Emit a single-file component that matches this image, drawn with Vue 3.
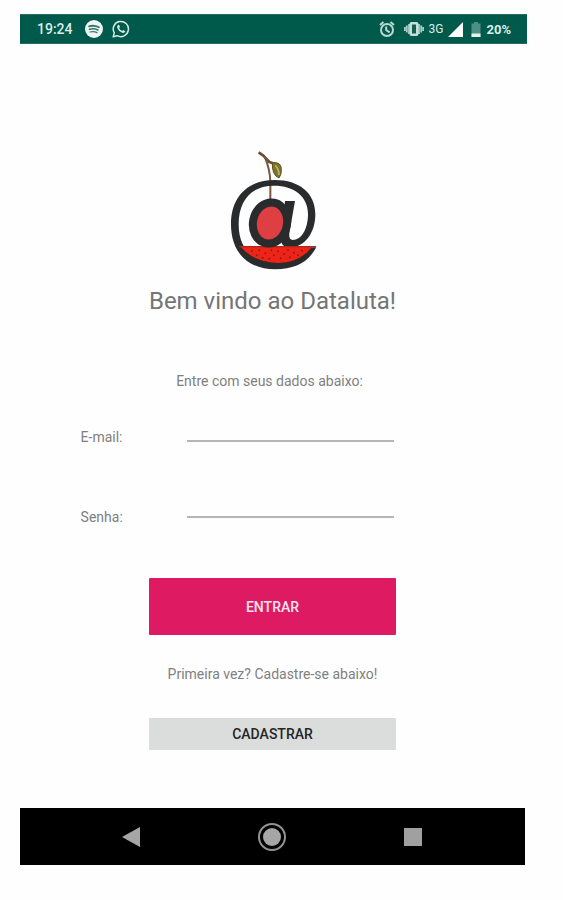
<script setup>
import { ref } from 'vue'

const email = ref('')
const senha = ref('')
const seeds = [
  [126, 333], [140, 346], [148, 331], [158, 354], [166, 340], [178, 356], [184, 331], [192, 346],
  [204, 334], [212, 355], [222, 342], [234, 330], [240, 352], [252, 338], [264, 346], [276, 332]
]
</script>

<template>
  <div class="page">
    <div class="phone">
      <header class="status">
        <div class="group left">
          <span class="clock">19:24</span>
          <svg width="18" height="18" viewBox="0 0 18 18" aria-hidden="true">
            <circle cx="9" cy="9" r="9" fill="#eef6f4" />
            <g fill="none" stroke="#35776b" stroke-linecap="round">
              <path d="M4 6.300Q9 4.800 14 7.200" stroke-width="1.800" />
              <path d="M4.500 9.200Q9 8 13 10" stroke-width="1.500" />
              <path d="M5 12Q9 11 12 12.600" stroke-width="1.200" />
            </g>
          </svg>
          <svg width="18" height="18" viewBox="0 0 18 18" aria-hidden="true">
            <path d="M1.200 16.800L2.300 12.900A7.600 7.600 0 1 1 5.200 15.700Z" fill="none" stroke="#d5e8e4" stroke-width="1.500" stroke-linejoin="round" />
            <path d="M6.300 4.800Q4.700 5.700 5.200 7.600Q6.600 11.800 10.800 13Q12.800 13.200 13.400 11.300L11.200 10L10.100 11.100Q8 10.200 7.100 8.100L8 7.100L7.200 4.900Z" fill="#d5e8e4" />
          </svg>
        </div>
        <div class="group right">
          <svg width="16" height="18" viewBox="0 0 16 18" aria-hidden="true">
            <g fill="none" stroke="#b9d8d2" stroke-width="2">
              <circle cx="8" cy="10" r="6" />
              <path d="M1 5L4.500 2M15 5L11.500 2M7.200 6.500V10L10.600 12.300" />
            </g>
          </svg>
          <svg width="20" height="18" viewBox="0 0 20 18" aria-hidden="true">
            <path d="M5 4V14M2.800 5.500V12.500M.8 7V11M15 4V14M17.200 5.500V12.500M19.200 7V11" stroke="#a5cec6" stroke-width="1.800" />
            <rect x="5.500" y="2" width="9" height="14" rx="2" fill="#c5dfda" />
            <rect x="8" y="4.500" width="4" height="9" fill="#145f51" />
          </svg>
          <span class="network">3G</span>
          <svg width="15" height="15" viewBox="0 0 15 15" aria-hidden="true">
            <path d="M0 15L15 0V15Z" fill="#fff" />
          </svg>
          <svg class="battery" width="10" height="15" viewBox="0 0 10 15" aria-hidden="true">
            <path d="M3 0H7V1.500H9.500V15H.5V1.500H3Z" fill="#4c9084" />
            <path d="M.5 11.500H9.500V15H.5Z" fill="#e5f1ee" />
          </svg>
          <span class="percent">20%</span>
        </div>
      </header>

      <main class="content">
        <svg class="logo" width="92" height="124" viewBox="51 21 276 372" role="img" aria-label="Dataluta">
          <path d="M146 37L160 47L178 66L193 71" fill="none" stroke="#67502f" stroke-width="8" stroke-linejoin="round" />
          <path d="M164 50Q180 88 181 125V182" fill="none" stroke="#79583e" stroke-width="6" />
          <path d="M187 68Q213 65 214 86Q215 105 207 114Q185 105 187 68Z" fill="#7d7429" stroke="#5c5524" stroke-width="3" />
          <path d="M196 77Q207 88 207 105" fill="none" stroke="#bbb167" stroke-width="5" />
          <path d="M225 183H255L238 280Q236 300 248 300C275 300 294 266 294 222C294 169 252 137 192 137C121 137 86 184 86 253C86 323 124 366 199 366C246 366 276 350 298 322H319C296 365 256 388 196 388C111 388 63 335 63 253C63 171 112 120 194 120C268 120 316 159 316 223C316 282 281 324 237 323Q213 322 213 296Z" fill="#292b2d" />
          <path d="M90 319H308Q271 367 206 369Q132 367 90 319Z" fill="#ed2417" />
          <circle v-for="(s, i) in seeds" :key="i" :cx="s[0]" :cy="s[1]" r="3" fill="#8f1d14" />
          <path d="M88 320H318" stroke="#a52a20" stroke-width="4" />
          <ellipse cx="180" cy="249" rx="51" ry="62" transform="rotate(12 180 249)" fill="#df3e43" stroke="#292b2d" stroke-width="24" />
        </svg>
        <h1>Bem vindo ao Dataluta!</h1>
        <p class="intro">Entre com seus dados abaixo:</p>

        <form @submit.prevent>
          <div class="fields">
            <div class="labels">
              <label for="email">E-mail:</label>
              <label for="senha">Senha:</label>
            </div>
            <div class="inputs">
              <input id="email" v-model="email" type="email" />
              <input id="senha" v-model="senha" type="password" />
            </div>
          </div>
          <button class="enter" type="submit">ENTRAR</button>
          <p class="hint">Primeira vez? Cadastre-se abaixo!</p>
          <button class="register" type="button">CADASTRAR</button>
        </form>
      </main>

      <nav class="navbar">
        <button type="button" aria-label="Voltar">
          <svg width="30" height="30" viewBox="0 0 30 30"><path d="M6 15L24 5V25Z" fill="#a6a6a6" /></svg>
        </button>
        <button type="button" aria-label="Início">
          <svg width="30" height="30" viewBox="0 0 30 30">
            <circle cx="15" cy="15" r="13" fill="none" stroke="#929292" stroke-width="2" />
            <circle cx="15" cy="15" r="9" fill="#a6a6a6" />
          </svg>
        </button>
        <button type="button" aria-label="Recentes">
          <svg width="30" height="30" viewBox="0 0 30 30"><path d="M6 6H24V24H6Z" fill="#a0a0a0" /></svg>
        </button>
      </nav>
    </div>
  </div>
</template>

<style>
body {
  background: #fefefe;
}
</style>

<style scoped>
.page {
  padding: 14px 36px 35px 20px;
  font-family: Roboto, "Liberation Sans", sans-serif;
  color: #808080;
}

.status {
  display: flex;
  justify-content: space-between;
  height: 30px;
  box-sizing: border-box;
  padding: 0 16px 0 17px;
  background: #005a4b;
  border: 1px solid #2b6c60;
  border-width: 1px 0;
  color: #dcebe8;
  font-weight: 500;
}

.group {
  display: flex;
  align-items: center;
}

.left {
  gap: 9px;
}

.right {
  gap: 5px;
}

.right svg:first-child {
  margin-right: 4px;
}

.clock {
  margin-right: 3px;
  font-size: 14px;
}

.network {
  font-size: 12px;
  font-weight: 400;
}

.battery {
  margin-left: 3px;
}

.percent {
  font-size: 13px;
  font-weight: 700;
}

.content {
  display: flex;
  flex-direction: column;
  align-items: center;
  padding: 103px 2px 58px 0;
}

.logo {
  display: block;
}

h1 {
  margin: 14px 0 0;
  font-size: 24px;
  line-height: 32px;
  font-weight: 400;
  color: #757575;
}

p {
  margin: 0;
  font-size: 14px;
  line-height: 20px;
}

.intro {
  margin-top: 54px;
  padding-right: 6px;
}

form {
  display: flex;
  flex-direction: column;
  align-items: center;
  width: 100%;
  margin-top: 11px;
}

.fields {
  display: grid;
  grid-template-columns: 107fr 207fr;
  width: 100%;
  box-sizing: border-box;
  padding: 0 26% 0 12%;
}

.labels,
.inputs {
  display: flex;
  flex-direction: column;
}

.labels {
  gap: 60px;
  padding-top: 25px;
}

.inputs {
  gap: 36px;
}

label {
  font-size: 14px;
  line-height: 20px;
}

input {
  width: 100%;
  height: 40px;
  box-sizing: border-box;
  padding: 0 4px;
  border: 0;
  border-bottom: 2px solid #b4b4b4;
  border-radius: 0;
  background: transparent;
  font: inherit;
  font-size: 16px;
  color: #404040;
  outline: none;
}

button {
  padding: 0;
  border: 0;
  font-family: inherit;
  cursor: pointer;
}

.enter,
.register {
  width: 49%;
  border-radius: 1px;
  font-size: 14px;
  font-weight: 500;
}

.enter {
  height: 57px;
  margin-top: 51px;
  background: #de1a62;
  color: #fbe4ed;
}

.hint {
  margin-top: 29px;
}

.register {
  height: 32px;
  margin-top: 34px;
  background: #dbdddc;
  color: #252525;
}

.navbar {
  display: flex;
  align-items: center;
  height: 57px;
  margin-right: 2px;
  padding: 0 42px 0 40px;
  background: #000;
}

.navbar button {
  display: flex;
  flex: 1;
  justify-content: center;
  background: transparent;
}
</style>
